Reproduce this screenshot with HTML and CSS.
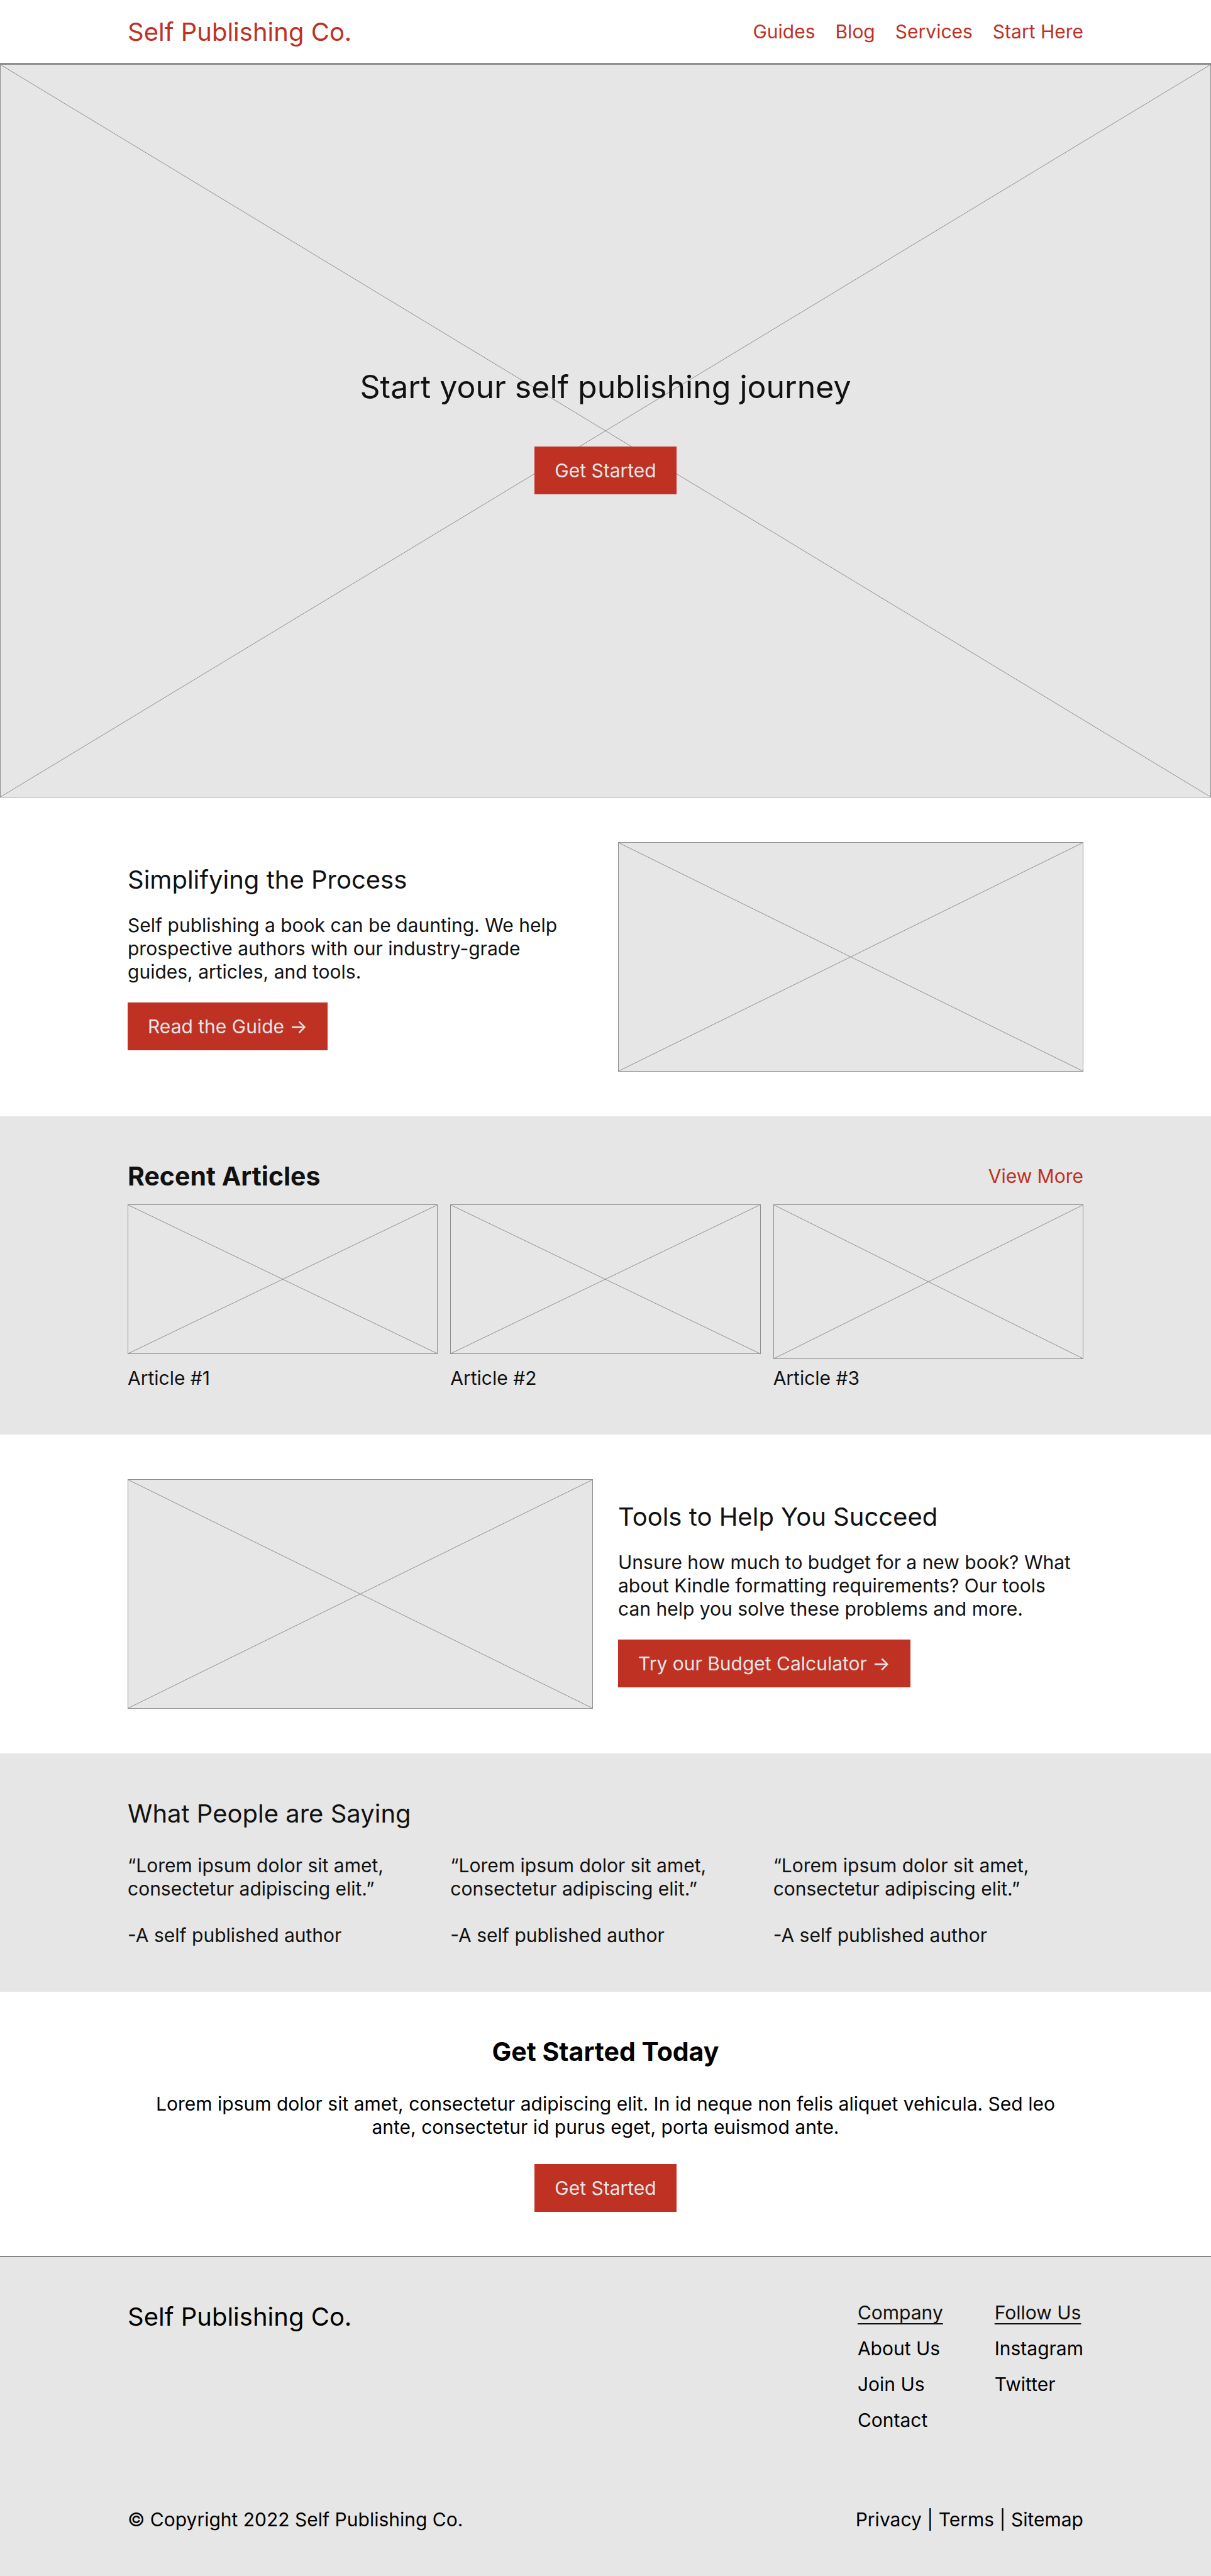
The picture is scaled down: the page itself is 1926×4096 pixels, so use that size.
FILE: index.html
```html
<!DOCTYPE html>
<html lang="en">
<head>
  <meta charset="utf-8">
  <meta name="viewport" content="width=device-width, initial-scale=1">
  <title>Self Publishing Co.</title>
  <link rel="stylesheet" href="styles.css">
</head>
<body>
  <header class="site-header">
    <div class="container site-header-row">
      <a class="brand brand-red" href="#">Self Publishing Co.</a>
      <nav class="site-nav" aria-label="Main">
        <a href="#">Guides</a>
        <a href="#">Blog</a>
        <a href="#">Services</a>
        <a href="#">Start Here</a>
      </nav>
    </div>
  </header>

  <main>
    <section class="hero">
      <div class="placeholder hero-picture">
        <svg class="cross" aria-hidden="true"><line x1="0" y1="0" x2="100%" y2="100%"/><line x1="100%" y1="0" x2="0" y2="100%"/></svg>
      </div>
      <div class="hero-content">
        <h1 class="hero-title">Start your self publishing journey</h1>
        <button class="button" type="button">Get Started</button>
      </div>
    </section>

    <section class="section">
      <div class="container split">
        <div class="split-text">
          <h2 class="heading">Simplifying the Process</h2>
          <p>Self publishing a book can be daunting. We help prospective authors with our industry-grade guides, articles, and tools.</p>
          <button class="button" type="button">Read the Guide →</button>
        </div>
        <div class="placeholder split-picture">
          <svg class="cross" aria-hidden="true"><line x1="0" y1="0" x2="100%" y2="100%"/><line x1="100%" y1="0" x2="0" y2="100%"/></svg>
        </div>
      </div>
    </section>

    <section class="section section-grey">
      <div class="container articles">
        <div class="articles-head">
          <h2 class="heading heading-bold">Recent Articles</h2>
          <a class="link-red" href="#">View More</a>
        </div>
        <div class="columns">
          <article class="article">
            <div class="placeholder article-picture">
              <svg class="cross" aria-hidden="true"><line x1="0" y1="0" x2="100%" y2="100%"/><line x1="100%" y1="0" x2="0" y2="100%"/></svg>
            </div>
            <p>Article #1</p>
          </article>
          <article class="article">
            <div class="placeholder article-picture">
              <svg class="cross" aria-hidden="true"><line x1="0" y1="0" x2="100%" y2="100%"/><line x1="100%" y1="0" x2="0" y2="100%"/></svg>
            </div>
            <p>Article #2</p>
          </article>
          <article class="article">
            <div class="placeholder article-picture article-picture-tall">
              <svg class="cross" aria-hidden="true"><line x1="0" y1="0" x2="100%" y2="100%"/><line x1="100%" y1="0" x2="0" y2="100%"/></svg>
            </div>
            <p>Article #3</p>
          </article>
        </div>
      </div>
    </section>

    <section class="section">
      <div class="container split">
        <div class="placeholder split-picture">
          <svg class="cross" aria-hidden="true"><line x1="0" y1="0" x2="100%" y2="100%"/><line x1="100%" y1="0" x2="0" y2="100%"/></svg>
        </div>
        <div class="split-text">
          <h2 class="heading">Tools to Help You Succeed</h2>
          <p>Unsure how much to budget for a new book? What about Kindle formatting requirements? Our tools can help you solve these problems and more.</p>
          <button class="button" type="button">Try our Budget Calculator →</button>
        </div>
      </div>
    </section>

    <section class="section section-grey">
      <div class="container stack">
        <h2 class="heading">What People are Saying</h2>
        <div class="columns">
          <blockquote class="quote">
            <p>“Lorem ipsum dolor sit amet, consectetur adipiscing elit.”</p>
            <footer>-A self published author</footer>
          </blockquote>
          <blockquote class="quote">
            <p>“Lorem ipsum dolor sit amet, consectetur adipiscing elit.”</p>
            <footer>-A self published author</footer>
          </blockquote>
          <blockquote class="quote">
            <p>“Lorem ipsum dolor sit amet, consectetur adipiscing elit.”</p>
            <footer>-A self published author</footer>
          </blockquote>
        </div>
      </div>
    </section>

    <section class="section section-cta">
      <div class="container stack stack-centered">
        <h2 class="heading heading-bold">Get Started Today</h2>
        <p class="cta-text">Lorem ipsum dolor sit amet, consectetur adipiscing elit. In id neque non felis aliquet vehicula. Sed leo ante, consectetur id purus eget, porta euismod ante.</p>
        <button class="button" type="button">Get Started</button>
      </div>
    </section>
  </main>

  <footer class="site-footer">
    <div class="container site-footer-inner">
      <div class="footer-top">
        <a class="brand" href="#">Self Publishing Co.</a>
        <div class="footer-menus">
          <nav class="footer-menu" aria-labelledby="menu-company">
            <h3 class="menu-title" id="menu-company">Company</h3>
            <a href="#">About Us</a>
            <a href="#">Join Us</a>
            <a href="#">Contact</a>
          </nav>
          <nav class="footer-menu" aria-labelledby="menu-follow">
            <h3 class="menu-title" id="menu-follow">Follow Us</h3>
            <a href="#">Instagram</a>
            <a href="#">Twitter</a>
          </nav>
        </div>
      </div>
      <div class="footer-bottom">
        <p>© Copyright 2022 Self Publishing Co.</p>
        <p><a href="#">Privacy</a> | <a href="#">Terms</a> | <a href="#">Sitemap</a></p>
      </div>
    </div>
  </footer>
</body>
</html>
```
FILE: styles.css
```css
:root {
  --ink: #111;
  --red: #be3123;
  --grey: #e6e6e6;
  --line: #8f8f8f;
}

* {
  box-sizing: border-box;
}

body {
  display: flex;
  flex-direction: column;
  min-height: 100vh;
  margin: 0;
  background: #fff;
  color: var(--ink);
  font-family: Inter, "Liberation Sans", sans-serif;
  font-size: 30px;
  line-height: 37px;
}

h1,
h2,
h3,
p,
blockquote {
  margin: 0;
}

a {
  color: inherit;
  text-decoration: none;
}

.container {
  width: 100%;
  max-width: 1520px;
  margin: 0 auto;
}

.brand,
.heading {
  font-size: 40px;
  line-height: 49px;
  font-weight: 400;
}

.heading-bold {
  font-size: 41px;
  font-weight: 700;
}

.brand-red,
.link-red,
.site-nav {
  color: var(--red);
}

.button {
  padding: 20px 32px;
  border: 0;
  background: var(--red);
  color: var(--grey);
  font: inherit;
  line-height: 36px;
  cursor: pointer;
}

/* Header */

.site-header {
  border-bottom: 1px solid var(--ink);
}

.site-header-row {
  display: flex;
  align-items: center;
  justify-content: space-between;
  min-height: 101px;
}

.site-nav {
  display: flex;
  gap: 32px;
}

/* Picture placeholders */

.placeholder {
  border: 1px solid var(--line);
  background: var(--grey);
}

.cross {
  display: block;
  width: 100%;
  height: 100%;
  stroke: var(--line);
  stroke-width: 1;
}

/* Hero */

.hero {
  display: grid;
}

.hero-picture,
.hero-content {
  grid-area: 1 / 1;
}

.hero-picture {
  aspect-ratio: 1926 / 1166;
}

.hero-content {
  z-index: 1;
  display: flex;
  flex-direction: column;
  align-items: center;
  justify-content: center;
  gap: 64px;
}

.hero-title {
  font-size: 50px;
  line-height: 61px;
  font-weight: 400;
  text-align: center;
}

/* Sections */

.section {
  padding: 71px 0;
}

.section-grey {
  background: var(--grey);
}

.section-cta {
  color: #000;
}

.split {
  display: grid;
  grid-template-columns: 1fr 1fr;
  align-items: center;
  gap: 40px;
}

.split-text {
  display: flex;
  flex-direction: column;
  align-items: flex-start;
  gap: 30px;
}

.split-text p {
  max-width: 730px;
}

.split-picture {
  aspect-ratio: 740 / 365;
}

.columns {
  display: grid;
  grid-template-columns: repeat(3, 1fr);
  gap: 20px;
}

.articles {
  display: flex;
  flex-direction: column;
  gap: 20px;
}

.articles-head {
  display: flex;
  align-items: center;
  justify-content: space-between;
}

.article {
  display: flex;
  flex-direction: column;
  justify-content: space-between;
  gap: 12px;
}

.article-picture {
  aspect-ratio: 493 / 238;
}

.article-picture-tall {
  aspect-ratio: 493 / 246;
}

.stack {
  display: flex;
  flex-direction: column;
  gap: 40px;
}

.stack-centered {
  align-items: center;
  text-align: center;
}

.quote {
  display: flex;
  flex-direction: column;
  gap: 37px;
}

.quote p {
  max-width: 440px;
}

.cta-text {
  max-width: 1480px;
}

/* Footer */

.site-footer {
  display: flex;
  flex-grow: 1;
  padding: 70px 0 71px;
  border-top: 1px solid #000;
  background: var(--grey);
  color: #000;
}

.site-footer-inner {
  display: flex;
  flex-direction: column;
  justify-content: space-between;
  gap: 80px;
}

.footer-top,
.footer-bottom {
  display: flex;
  align-items: flex-start;
  justify-content: space-between;
}

.footer-menus {
  display: flex;
  gap: 82px;
}

.footer-menu {
  display: flex;
  flex-direction: column;
  align-items: flex-start;
  gap: 20px;
}

.menu-title {
  color: var(--ink);
  font-size: 30px;
  font-weight: 400;
  text-decoration: underline;
  text-decoration-thickness: 2px;
  text-decoration-skip-ink: none;
  text-underline-offset: 6px;
}
```
